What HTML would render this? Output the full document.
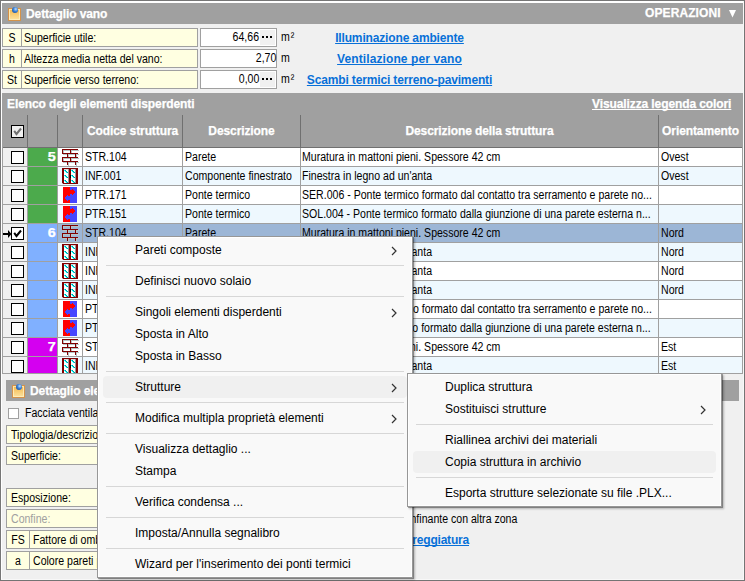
<!DOCTYPE html><html><head><meta charset="utf-8"><style>
*{margin:0;padding:0;box-sizing:border-box}
html,body{width:745px;height:581px;overflow:hidden}
body{position:relative;background:#f0f0f0;font-family:"Liberation Sans",sans-serif}
.a{position:absolute}
.t{position:absolute;font-size:12px;line-height:13px;white-space:nowrap;color:#000;transform:scaleX(0.88);transform-origin:0 0}
.bw{position:absolute;font-size:12px;font-weight:bold;line-height:13px;letter-spacing:-0.1px;white-space:nowrap;color:#fff;-webkit-text-stroke:0.25px #fff}
.lk{position:absolute;font-size:12px;font-weight:bold;line-height:13px;letter-spacing:-0.15px;white-space:nowrap;color:#0870d8;text-decoration:underline;text-decoration-skip-ink:none}
.yb{position:absolute;background:#ffffe1;border:1px solid #a0a0a0}
.m{position:absolute;font-size:12px;line-height:15px;white-space:nowrap;color:#000}
.sep{position:absolute;height:1px;background:#d7d7d7}
</style></head><body><div class="a" style="left:0px;top:0px;width:745px;height:1px;background:#767676;"></div>
<div class="a" style="left:0px;top:0px;width:1px;height:581px;background:#767676;"></div>
<div class="a" style="left:1px;top:1px;width:743px;height:2px;background:#ffffff;"></div>
<div class="a" style="left:1px;top:1px;width:1px;height:579px;background:#ffffff;"></div>
<div class="a" style="left:743px;top:1px;width:1px;height:579px;background:#f8f8f8;"></div>
<div class="a" style="left:1px;top:579px;width:743px;height:1px;background:#f8f8f8;"></div>
<div class="a" style="left:744px;top:0px;width:1px;height:581px;background:#747474;"></div>
<div class="a" style="left:0px;top:580px;width:745px;height:1px;background:#747474;"></div>
<div class="a" style="left:2px;top:3px;width:741px;height:21px;background:#a0a0a0;"></div>
<svg class="a" style="left:8px;top:7px" width="14" height="14" viewBox="0 0 14 14">
<defs><linearGradient id="ng87" x1="0" y1="0" x2="0" y2="1"><stop offset="0" stop-color="#f3b548"/><stop offset="1" stop-color="#fce4a2"/></linearGradient>
<radialGradient id="bg87" cx="0.62" cy="0.35" r="0.75"><stop offset="0" stop-color="#bfe0ff"/><stop offset="0.5" stop-color="#3b82d8"/><stop offset="1" stop-color="#1f4f9c"/></radialGradient></defs>
<rect x="0.5" y="1.5" width="12" height="12" fill="url(#ng87)" stroke="#d4924a" stroke-width="1"/>
<rect x="1.5" y="2.5" width="10" height="10" fill="none" stroke="#fff0c0" stroke-width="1" opacity="0.8"/>
<circle cx="7" cy="3" r="3" fill="url(#bg87)"/>
</svg>
<div class="bw" style="left:26px;top:8px;">Dettaglio vano</div>
<div class="bw" style="left:645px;top:7px;letter-spacing:0.1px">OPERAZIONI</div>
<svg class="a" style="left:729px;top:10px" width="7" height="8"><path d="M0 0H7L3.5 7.6Z" fill="#fff"/></svg>
<div class="a" style="left:2px;top:28px;width:196px;height:19px;background:#ffffe1;border:1px solid #a0a0a0;"></div>
<div class="a" style="left:21px;top:28px;width:1px;height:19px;background:#a0a0a0;"></div>
<div class="t" style="left:3px;width:18px;top:32px;text-align:center;transform-origin:50% 0;">S</div>
<div class="t" style="left:24px;top:32px;">Superficie utile:</div>
<div class="a" style="left:200px;top:28px;width:77px;height:19px;background:#ffffff;border:1px solid #a0a0a0;"></div>
<div class="a" style="left:260px;top:30px;width:15px;height:15px;background:#f0f0f0;"></div>
<svg class="a" style="left:262px;top:36px" width="12" height="3"><rect x="0" y="0" width="2" height="2" fill="#000"/><rect x="4" y="0" width="2" height="2" fill="#000"/><rect x="8" y="0" width="2" height="2" fill="#000"/></svg>
<div class="t" style="right:486px;top:31px;text-align:right;transform-origin:100% 0;">64,66</div>
<div class="t" style="left:281px;top:31px;letter-spacing:1px">m²</div>
<div class="lk" style="left:300px;width:199px;top:32px;text-align:center;transform-origin:50% 0;">Illuminazione ambiente</div>
<div class="a" style="left:2px;top:49px;width:196px;height:19px;background:#ffffe1;border:1px solid #a0a0a0;"></div>
<div class="a" style="left:21px;top:49px;width:1px;height:19px;background:#a0a0a0;"></div>
<div class="t" style="left:3px;width:18px;top:53px;text-align:center;transform-origin:50% 0;">h</div>
<div class="t" style="left:24px;top:53px;">Altezza media netta del vano:</div>
<div class="a" style="left:200px;top:49px;width:77px;height:19px;background:#ffffff;border:1px solid #a0a0a0;"></div>
<div class="t" style="right:469px;top:52px;text-align:right;transform-origin:100% 0;">2,70</div>
<div class="t" style="left:281px;top:52px;letter-spacing:1px">m</div>
<div class="lk" style="left:300px;width:199px;top:53px;text-align:center;transform-origin:50% 0;letter-spacing:0.1px">Ventilazione per vano</div>
<div class="a" style="left:2px;top:70px;width:196px;height:19px;background:#ffffe1;border:1px solid #a0a0a0;"></div>
<div class="a" style="left:21px;top:70px;width:1px;height:19px;background:#a0a0a0;"></div>
<div class="t" style="left:3px;width:18px;top:74px;text-align:center;transform-origin:50% 0;">St</div>
<div class="t" style="left:24px;top:74px;">Superficie verso terreno:</div>
<div class="a" style="left:200px;top:70px;width:77px;height:19px;background:#ffffff;border:1px solid #a0a0a0;"></div>
<div class="a" style="left:260px;top:72px;width:15px;height:15px;background:#f0f0f0;"></div>
<svg class="a" style="left:262px;top:78px" width="12" height="3"><rect x="0" y="0" width="2" height="2" fill="#000"/><rect x="4" y="0" width="2" height="2" fill="#000"/><rect x="8" y="0" width="2" height="2" fill="#000"/></svg>
<div class="t" style="right:486px;top:73px;text-align:right;transform-origin:100% 0;">0,00</div>
<div class="t" style="left:281px;top:73px;letter-spacing:1px">m²</div>
<div class="lk" style="left:300px;width:199px;top:74px;text-align:center;transform-origin:50% 0;">Scambi termici terreno-pavimenti</div>
<div class="a" style="left:2px;top:93px;width:741px;height:54px;background:#a0a0a0;"></div>
<div class="bw" style="left:7px;top:98px;">Elenco degli elementi disperdenti</div>
<div class="bw" style="left:592px;top:98px;text-decoration:underline;text-decoration-skip-ink:none">Visualizza legenda colori</div>
<div class="a" style="left:27px;top:115px;width:1px;height:32px;background:#707070;"></div>
<div class="a" style="left:57px;top:115px;width:1px;height:32px;background:#707070;"></div>
<div class="a" style="left:82px;top:115px;width:1px;height:32px;background:#707070;"></div>
<div class="a" style="left:182px;top:115px;width:1px;height:32px;background:#707070;"></div>
<div class="a" style="left:300px;top:115px;width:1px;height:32px;background:#707070;"></div>
<div class="a" style="left:658px;top:115px;width:1px;height:32px;background:#707070;"></div>
<div class="a" style="left:2px;top:147px;width:741px;height:1px;background:#707070;"></div>
<div class="a" style="left:11px;top:125px;width:13px;height:13px;background:#f0f0f0;border:1px solid #000;"></div>
<svg class="a" style="left:13px;top:127px" width="10" height="10"><path d="M1.2 3.8L3.5 7L8 1.5" stroke="#707070" stroke-width="2" fill="none"/></svg>
<div class="bw" style="left:83px;width:99px;top:125px;text-align:center;transform-origin:50% 0;">Codice struttura</div>
<div class="bw" style="left:183px;width:117px;top:125px;text-align:center;transform-origin:50% 0;">Descrizione</div>
<div class="bw" style="left:301px;width:357px;top:125px;text-align:center;transform-origin:50% 0;">Descrizione della struttura</div>
<div class="bw" style="left:659px;width:83px;top:125px;text-align:center;transform-origin:50% 0;">Orientamento</div>
<div class="a" style="left:3px;top:148px;width:24px;height:18px;background:#f0f0f0;"></div>
<div class="a" style="left:28px;top:148px;width:29px;height:18px;background:#4caa4c;"></div>
<div class="a" style="left:58px;top:148px;width:24px;height:18px;background:#ffffff;"></div>
<div class="a" style="left:83px;top:148px;width:659px;height:18px;background:#ffffff;"></div>
<div class="a" style="left:2px;top:166px;width:741px;height:1px;background:#a0a0a0;"></div>
<div class="a" style="left:27px;top:148px;width:1px;height:18px;background:#a0a0a0;"></div>
<div class="a" style="left:57px;top:148px;width:1px;height:18px;background:#a0a0a0;"></div>
<div class="a" style="left:82px;top:148px;width:1px;height:18px;background:#a0a0a0;"></div>
<div class="a" style="left:182px;top:148px;width:1px;height:18px;background:#a0a0a0;"></div>
<div class="a" style="left:300px;top:148px;width:1px;height:18px;background:#a0a0a0;"></div>
<div class="a" style="left:658px;top:148px;width:1px;height:18px;background:#a0a0a0;"></div>
<div class="a" style="left:11px;top:151px;width:13px;height:13px;background:#ffffff;border:1px solid #000;"></div>
<div class="bw" style="right:689px;top:151px;text-align:right;transform-origin:100% 0;letter-spacing:0;font-size:12px;transform:scaleX(1.2)">5</div>
<svg class="a" style="left:62px;top:149px" width="17" height="17" shape-rendering="crispEdges"><path d="M0 0h16v1h-16zM0 4h16v1h-16zM0 8h16v1h-16zM0 12h16v1h-16zM0 1h1v3h-1zM8 1h1v3h-1zM0 9h1v3h-1zM8 9h1v3h-1zM5 5h1v3h-1zM13 5h1v3h-1zM5 13h1v3h-1zM13 13h1v3h-1z" fill="#b4c4c4" transform="translate(1,1)"/><path d="M0 0h16v1h-16zM0 4h16v1h-16zM0 8h16v1h-16zM0 12h16v1h-16zM0 1h1v3h-1zM8 1h1v3h-1zM0 9h1v3h-1zM8 9h1v3h-1zM5 5h1v3h-1zM13 5h1v3h-1zM5 13h1v3h-1zM13 13h1v3h-1z" fill="#800000"/></svg>
<div class="t" style="left:85px;top:151px;">STR.104</div>
<div class="t" style="left:185px;top:151px;">Parete</div>
<div class="t" style="left:302px;top:151px;">Muratura in mattoni pieni. Spessore 42 cm</div>
<div class="t" style="left:661px;top:151px;">Ovest</div>
<div class="a" style="left:3px;top:167px;width:24px;height:18px;background:#f0f0f0;"></div>
<div class="a" style="left:28px;top:167px;width:29px;height:18px;background:#4caa4c;"></div>
<div class="a" style="left:58px;top:167px;width:24px;height:18px;background:#eef8fe;"></div>
<div class="a" style="left:83px;top:167px;width:659px;height:18px;background:#eef8fe;"></div>
<div class="a" style="left:2px;top:185px;width:741px;height:1px;background:#a0a0a0;"></div>
<div class="a" style="left:27px;top:167px;width:1px;height:18px;background:#a0a0a0;"></div>
<div class="a" style="left:57px;top:167px;width:1px;height:18px;background:#a0a0a0;"></div>
<div class="a" style="left:82px;top:167px;width:1px;height:18px;background:#a0a0a0;"></div>
<div class="a" style="left:182px;top:167px;width:1px;height:18px;background:#a0a0a0;"></div>
<div class="a" style="left:300px;top:167px;width:1px;height:18px;background:#a0a0a0;"></div>
<div class="a" style="left:658px;top:167px;width:1px;height:18px;background:#a0a0a0;"></div>
<div class="a" style="left:11px;top:170px;width:13px;height:13px;background:#ffffff;border:1px solid #000;"></div>
<svg class="a" style="left:62px;top:168px" width="16" height="16" shape-rendering="crispEdges">
<rect x="0" y="0" width="16" height="16" fill="#800000"/>
<rect x="0" y="15" width="1" height="1" fill="#f0f8ff" opacity="0.7"/>
<rect x="2" y="1" width="5" height="14" fill="#ffffff"/><rect x="9" y="1" width="5" height="14" fill="#ffffff"/>
<rect x="6" y="1" width="1" height="14" fill="#9a9a9a"/><rect x="13" y="1" width="1" height="14" fill="#9a9a9a"/>
<rect x="2" y="1" width="4" height="1" fill="#d8d8d8"/><rect x="9" y="1" width="4" height="1" fill="#d8d8d8"/>
<path d="M2 2h1v1h-1zM3 3h1v1h-1zM4 4h1v1h-1zM2 7h1v1h-1zM3 8h1v1h-1zM4 9h1v1h-1zM2 12h1v1h-1zM3 13h1v1h-1zM4 14h1v1h-1zM9 2h1v1h-1zM10 3h1v1h-1zM11 4h1v1h-1zM9 7h1v1h-1zM10 8h1v1h-1zM11 9h1v1h-1zM9 12h1v1h-1zM10 13h1v1h-1zM11 14h1v1h-1z" fill="#00ffff"/><path d="M3 2h1v1h-1zM4 3h1v1h-1zM5 4h1v1h-1zM3 7h1v1h-1zM4 8h1v1h-1zM5 9h1v1h-1zM3 12h1v1h-1zM4 13h1v1h-1zM5 14h1v1h-1zM10 2h1v1h-1zM11 3h1v1h-1zM12 4h1v1h-1zM10 7h1v1h-1zM11 8h1v1h-1zM12 9h1v1h-1zM10 12h1v1h-1zM11 13h1v1h-1zM12 14h1v1h-1z" fill="#00a0a0"/>
<rect x="8" y="7" width="1" height="3" fill="#000"/>
</svg>
<div class="t" style="left:85px;top:170px;">INF.001</div>
<div class="t" style="left:185px;top:170px;">Componente finestrato</div>
<div class="t" style="left:302px;top:170px;">Finestra in legno ad un'anta</div>
<div class="t" style="left:661px;top:170px;">Ovest</div>
<div class="a" style="left:3px;top:186px;width:24px;height:18px;background:#f0f0f0;"></div>
<div class="a" style="left:28px;top:186px;width:29px;height:18px;background:#4caa4c;"></div>
<div class="a" style="left:58px;top:186px;width:24px;height:18px;background:#ffffff;"></div>
<div class="a" style="left:83px;top:186px;width:659px;height:18px;background:#ffffff;"></div>
<div class="a" style="left:2px;top:204px;width:741px;height:1px;background:#a0a0a0;"></div>
<div class="a" style="left:27px;top:186px;width:1px;height:18px;background:#a0a0a0;"></div>
<div class="a" style="left:57px;top:186px;width:1px;height:18px;background:#a0a0a0;"></div>
<div class="a" style="left:82px;top:186px;width:1px;height:18px;background:#a0a0a0;"></div>
<div class="a" style="left:182px;top:186px;width:1px;height:18px;background:#a0a0a0;"></div>
<div class="a" style="left:300px;top:186px;width:1px;height:18px;background:#a0a0a0;"></div>
<div class="a" style="left:658px;top:186px;width:1px;height:18px;background:#a0a0a0;"></div>
<div class="a" style="left:11px;top:189px;width:13px;height:13px;background:#ffffff;border:1px solid #000;"></div>
<svg class="a" style="left:63px;top:187px" width="14" height="16" shape-rendering="crispEdges">
<rect x="0" y="0" width="7" height="16" fill="#ff0000"/><rect x="7" y="0" width="7" height="16" fill="#4646ff"/>
<path d="M7 3h2v-1h1v1h1v1h1v2h-1v1h-1v1h-1v-1h-2z" fill="#ff0000"/>
<path d="M7 9h-2v-1h-1v1h-1v1h-1v2h1v1h1v1h1v-1h2z" fill="#4646ff"/>
</svg>
<div class="t" style="left:85px;top:189px;">PTR.171</div>
<div class="t" style="left:185px;top:189px;">Ponte termico</div>
<div class="t" style="left:302px;top:189px;">SER.006 - Ponte termico formato dal contatto tra serramento e parete no...</div>
<div class="t" style="left:661px;top:189px;"></div>
<div class="a" style="left:3px;top:205px;width:24px;height:18px;background:#f0f0f0;"></div>
<div class="a" style="left:28px;top:205px;width:29px;height:18px;background:#4caa4c;"></div>
<div class="a" style="left:58px;top:205px;width:24px;height:18px;background:#eef8fe;"></div>
<div class="a" style="left:83px;top:205px;width:659px;height:18px;background:#eef8fe;"></div>
<div class="a" style="left:2px;top:223px;width:741px;height:1px;background:#a0a0a0;"></div>
<div class="a" style="left:27px;top:205px;width:1px;height:18px;background:#a0a0a0;"></div>
<div class="a" style="left:57px;top:205px;width:1px;height:18px;background:#a0a0a0;"></div>
<div class="a" style="left:82px;top:205px;width:1px;height:18px;background:#a0a0a0;"></div>
<div class="a" style="left:182px;top:205px;width:1px;height:18px;background:#a0a0a0;"></div>
<div class="a" style="left:300px;top:205px;width:1px;height:18px;background:#a0a0a0;"></div>
<div class="a" style="left:658px;top:205px;width:1px;height:18px;background:#a0a0a0;"></div>
<div class="a" style="left:11px;top:208px;width:13px;height:13px;background:#ffffff;border:1px solid #000;"></div>
<svg class="a" style="left:63px;top:206px" width="14" height="16" shape-rendering="crispEdges">
<rect x="0" y="0" width="7" height="16" fill="#ff0000"/><rect x="7" y="0" width="7" height="16" fill="#4646ff"/>
<path d="M7 3h2v-1h1v1h1v1h1v2h-1v1h-1v1h-1v-1h-2z" fill="#ff0000"/>
<path d="M7 9h-2v-1h-1v1h-1v1h-1v2h1v1h1v1h1v-1h2z" fill="#4646ff"/>
</svg>
<div class="t" style="left:85px;top:208px;">PTR.151</div>
<div class="t" style="left:185px;top:208px;">Ponte termico</div>
<div class="t" style="left:302px;top:208px;">SOL.004 - Ponte termico formato dalla giunzione di una parete esterna n...</div>
<div class="t" style="left:661px;top:208px;"></div>
<div class="a" style="left:3px;top:224px;width:24px;height:18px;background:#f0f0f0;"></div>
<div class="a" style="left:28px;top:224px;width:29px;height:18px;background:#80b0ff;"></div>
<div class="a" style="left:58px;top:224px;width:24px;height:18px;background:#9cb6d6;"></div>
<div class="a" style="left:83px;top:224px;width:659px;height:18px;background:#9cb6d6;"></div>
<div class="a" style="left:2px;top:242px;width:741px;height:1px;background:#a0a0a0;"></div>
<div class="a" style="left:27px;top:224px;width:1px;height:18px;background:#a0a0a0;"></div>
<div class="a" style="left:57px;top:224px;width:1px;height:18px;background:#a0a0a0;"></div>
<div class="a" style="left:82px;top:224px;width:1px;height:18px;background:#a0a0a0;"></div>
<div class="a" style="left:182px;top:224px;width:1px;height:18px;background:#a0a0a0;"></div>
<div class="a" style="left:300px;top:224px;width:1px;height:18px;background:#a0a0a0;"></div>
<div class="a" style="left:658px;top:224px;width:1px;height:18px;background:#a0a0a0;"></div>
<div class="a" style="left:11px;top:227px;width:13px;height:13px;background:#ffffff;border:1px solid #000;"></div>
<svg class="a" style="left:13px;top:229px" width="10" height="10"><path d="M1.2 3.8L3.5 7L8 1.5" stroke="#000" stroke-width="2" fill="none"/></svg>
<svg class="a" style="left:3px;top:230px" width="9" height="8"><path d="M0 3h5v2h-5z M5 0l3.5 4l-3.5 4z" fill="#000"/></svg>
<div class="bw" style="right:689px;top:227px;text-align:right;transform-origin:100% 0;letter-spacing:0;font-size:12px;transform:scaleX(1.2)">6</div>
<svg class="a" style="left:62px;top:225px" width="17" height="17" shape-rendering="crispEdges"><path d="M0 0h16v1h-16zM0 4h16v1h-16zM0 8h16v1h-16zM0 12h16v1h-16zM0 1h1v3h-1zM8 1h1v3h-1zM0 9h1v3h-1zM8 9h1v3h-1zM5 5h1v3h-1zM13 5h1v3h-1zM5 13h1v3h-1zM13 13h1v3h-1z" fill="#b4c4c4" transform="translate(1,1)"/><path d="M0 0h16v1h-16zM0 4h16v1h-16zM0 8h16v1h-16zM0 12h16v1h-16zM0 1h1v3h-1zM8 1h1v3h-1zM0 9h1v3h-1zM8 9h1v3h-1zM5 5h1v3h-1zM13 5h1v3h-1zM5 13h1v3h-1zM13 13h1v3h-1z" fill="#800000"/></svg>
<div class="t" style="left:85px;top:227px;">STR.104</div>
<div class="t" style="left:185px;top:227px;">Parete</div>
<div class="t" style="left:302px;top:227px;">Muratura in mattoni pieni. Spessore 42 cm</div>
<div class="t" style="left:661px;top:227px;">Nord</div>
<div class="a" style="left:3px;top:243px;width:24px;height:18px;background:#f0f0f0;"></div>
<div class="a" style="left:28px;top:243px;width:29px;height:18px;background:#80b0ff;"></div>
<div class="a" style="left:58px;top:243px;width:24px;height:18px;background:#eef8fe;"></div>
<div class="a" style="left:83px;top:243px;width:659px;height:18px;background:#eef8fe;"></div>
<div class="a" style="left:2px;top:261px;width:741px;height:1px;background:#a0a0a0;"></div>
<div class="a" style="left:27px;top:243px;width:1px;height:18px;background:#a0a0a0;"></div>
<div class="a" style="left:57px;top:243px;width:1px;height:18px;background:#a0a0a0;"></div>
<div class="a" style="left:82px;top:243px;width:1px;height:18px;background:#a0a0a0;"></div>
<div class="a" style="left:182px;top:243px;width:1px;height:18px;background:#a0a0a0;"></div>
<div class="a" style="left:300px;top:243px;width:1px;height:18px;background:#a0a0a0;"></div>
<div class="a" style="left:658px;top:243px;width:1px;height:18px;background:#a0a0a0;"></div>
<div class="a" style="left:11px;top:246px;width:13px;height:13px;background:#ffffff;border:1px solid #000;"></div>
<svg class="a" style="left:62px;top:244px" width="16" height="16" shape-rendering="crispEdges">
<rect x="0" y="0" width="16" height="16" fill="#800000"/>
<rect x="0" y="15" width="1" height="1" fill="#f0f8ff" opacity="0.7"/>
<rect x="2" y="1" width="5" height="14" fill="#ffffff"/><rect x="9" y="1" width="5" height="14" fill="#ffffff"/>
<rect x="6" y="1" width="1" height="14" fill="#9a9a9a"/><rect x="13" y="1" width="1" height="14" fill="#9a9a9a"/>
<rect x="2" y="1" width="4" height="1" fill="#d8d8d8"/><rect x="9" y="1" width="4" height="1" fill="#d8d8d8"/>
<path d="M2 2h1v1h-1zM3 3h1v1h-1zM4 4h1v1h-1zM2 7h1v1h-1zM3 8h1v1h-1zM4 9h1v1h-1zM2 12h1v1h-1zM3 13h1v1h-1zM4 14h1v1h-1zM9 2h1v1h-1zM10 3h1v1h-1zM11 4h1v1h-1zM9 7h1v1h-1zM10 8h1v1h-1zM11 9h1v1h-1zM9 12h1v1h-1zM10 13h1v1h-1zM11 14h1v1h-1z" fill="#00ffff"/><path d="M3 2h1v1h-1zM4 3h1v1h-1zM5 4h1v1h-1zM3 7h1v1h-1zM4 8h1v1h-1zM5 9h1v1h-1zM3 12h1v1h-1zM4 13h1v1h-1zM5 14h1v1h-1zM10 2h1v1h-1zM11 3h1v1h-1zM12 4h1v1h-1zM10 7h1v1h-1zM11 8h1v1h-1zM12 9h1v1h-1zM10 12h1v1h-1zM11 13h1v1h-1zM12 14h1v1h-1z" fill="#00a0a0"/>
<rect x="8" y="7" width="1" height="3" fill="#000"/>
</svg>
<div class="t" style="left:85px;top:246px;">INF.002</div>
<div class="t" style="left:185px;top:246px;">Componente finestrato</div>
<div class="t" style="left:302px;top:246px;">Finestra in legno ad un'anta</div>
<div class="t" style="left:661px;top:246px;">Nord</div>
<div class="a" style="left:3px;top:262px;width:24px;height:18px;background:#f0f0f0;"></div>
<div class="a" style="left:28px;top:262px;width:29px;height:18px;background:#80b0ff;"></div>
<div class="a" style="left:58px;top:262px;width:24px;height:18px;background:#ffffff;"></div>
<div class="a" style="left:83px;top:262px;width:659px;height:18px;background:#ffffff;"></div>
<div class="a" style="left:2px;top:280px;width:741px;height:1px;background:#a0a0a0;"></div>
<div class="a" style="left:27px;top:262px;width:1px;height:18px;background:#a0a0a0;"></div>
<div class="a" style="left:57px;top:262px;width:1px;height:18px;background:#a0a0a0;"></div>
<div class="a" style="left:82px;top:262px;width:1px;height:18px;background:#a0a0a0;"></div>
<div class="a" style="left:182px;top:262px;width:1px;height:18px;background:#a0a0a0;"></div>
<div class="a" style="left:300px;top:262px;width:1px;height:18px;background:#a0a0a0;"></div>
<div class="a" style="left:658px;top:262px;width:1px;height:18px;background:#a0a0a0;"></div>
<div class="a" style="left:11px;top:265px;width:13px;height:13px;background:#ffffff;border:1px solid #000;"></div>
<svg class="a" style="left:62px;top:263px" width="16" height="16" shape-rendering="crispEdges">
<rect x="0" y="0" width="16" height="16" fill="#800000"/>
<rect x="0" y="15" width="1" height="1" fill="#f0f8ff" opacity="0.7"/>
<rect x="2" y="1" width="5" height="14" fill="#ffffff"/><rect x="9" y="1" width="5" height="14" fill="#ffffff"/>
<rect x="6" y="1" width="1" height="14" fill="#9a9a9a"/><rect x="13" y="1" width="1" height="14" fill="#9a9a9a"/>
<rect x="2" y="1" width="4" height="1" fill="#d8d8d8"/><rect x="9" y="1" width="4" height="1" fill="#d8d8d8"/>
<path d="M2 2h1v1h-1zM3 3h1v1h-1zM4 4h1v1h-1zM2 7h1v1h-1zM3 8h1v1h-1zM4 9h1v1h-1zM2 12h1v1h-1zM3 13h1v1h-1zM4 14h1v1h-1zM9 2h1v1h-1zM10 3h1v1h-1zM11 4h1v1h-1zM9 7h1v1h-1zM10 8h1v1h-1zM11 9h1v1h-1zM9 12h1v1h-1zM10 13h1v1h-1zM11 14h1v1h-1z" fill="#00ffff"/><path d="M3 2h1v1h-1zM4 3h1v1h-1zM5 4h1v1h-1zM3 7h1v1h-1zM4 8h1v1h-1zM5 9h1v1h-1zM3 12h1v1h-1zM4 13h1v1h-1zM5 14h1v1h-1zM10 2h1v1h-1zM11 3h1v1h-1zM12 4h1v1h-1zM10 7h1v1h-1zM11 8h1v1h-1zM12 9h1v1h-1zM10 12h1v1h-1zM11 13h1v1h-1zM12 14h1v1h-1z" fill="#00a0a0"/>
<rect x="8" y="7" width="1" height="3" fill="#000"/>
</svg>
<div class="t" style="left:85px;top:265px;">INF.003</div>
<div class="t" style="left:185px;top:265px;">Componente finestrato</div>
<div class="t" style="left:302px;top:265px;">Finestra in legno ad un'anta</div>
<div class="t" style="left:661px;top:265px;">Nord</div>
<div class="a" style="left:3px;top:281px;width:24px;height:18px;background:#f0f0f0;"></div>
<div class="a" style="left:28px;top:281px;width:29px;height:18px;background:#80b0ff;"></div>
<div class="a" style="left:58px;top:281px;width:24px;height:18px;background:#eef8fe;"></div>
<div class="a" style="left:83px;top:281px;width:659px;height:18px;background:#eef8fe;"></div>
<div class="a" style="left:2px;top:299px;width:741px;height:1px;background:#a0a0a0;"></div>
<div class="a" style="left:27px;top:281px;width:1px;height:18px;background:#a0a0a0;"></div>
<div class="a" style="left:57px;top:281px;width:1px;height:18px;background:#a0a0a0;"></div>
<div class="a" style="left:82px;top:281px;width:1px;height:18px;background:#a0a0a0;"></div>
<div class="a" style="left:182px;top:281px;width:1px;height:18px;background:#a0a0a0;"></div>
<div class="a" style="left:300px;top:281px;width:1px;height:18px;background:#a0a0a0;"></div>
<div class="a" style="left:658px;top:281px;width:1px;height:18px;background:#a0a0a0;"></div>
<div class="a" style="left:11px;top:284px;width:13px;height:13px;background:#ffffff;border:1px solid #000;"></div>
<svg class="a" style="left:62px;top:282px" width="16" height="16" shape-rendering="crispEdges">
<rect x="0" y="0" width="16" height="16" fill="#800000"/>
<rect x="0" y="15" width="1" height="1" fill="#f0f8ff" opacity="0.7"/>
<rect x="2" y="1" width="5" height="14" fill="#ffffff"/><rect x="9" y="1" width="5" height="14" fill="#ffffff"/>
<rect x="6" y="1" width="1" height="14" fill="#9a9a9a"/><rect x="13" y="1" width="1" height="14" fill="#9a9a9a"/>
<rect x="2" y="1" width="4" height="1" fill="#d8d8d8"/><rect x="9" y="1" width="4" height="1" fill="#d8d8d8"/>
<path d="M2 2h1v1h-1zM3 3h1v1h-1zM4 4h1v1h-1zM2 7h1v1h-1zM3 8h1v1h-1zM4 9h1v1h-1zM2 12h1v1h-1zM3 13h1v1h-1zM4 14h1v1h-1zM9 2h1v1h-1zM10 3h1v1h-1zM11 4h1v1h-1zM9 7h1v1h-1zM10 8h1v1h-1zM11 9h1v1h-1zM9 12h1v1h-1zM10 13h1v1h-1zM11 14h1v1h-1z" fill="#00ffff"/><path d="M3 2h1v1h-1zM4 3h1v1h-1zM5 4h1v1h-1zM3 7h1v1h-1zM4 8h1v1h-1zM5 9h1v1h-1zM3 12h1v1h-1zM4 13h1v1h-1zM5 14h1v1h-1zM10 2h1v1h-1zM11 3h1v1h-1zM12 4h1v1h-1zM10 7h1v1h-1zM11 8h1v1h-1zM12 9h1v1h-1zM10 12h1v1h-1zM11 13h1v1h-1zM12 14h1v1h-1z" fill="#00a0a0"/>
<rect x="8" y="7" width="1" height="3" fill="#000"/>
</svg>
<div class="t" style="left:85px;top:284px;">INF.004</div>
<div class="t" style="left:185px;top:284px;">Componente finestrato</div>
<div class="t" style="left:302px;top:284px;">Finestra in legno ad un'anta</div>
<div class="t" style="left:661px;top:284px;">Nord</div>
<div class="a" style="left:3px;top:300px;width:24px;height:18px;background:#f0f0f0;"></div>
<div class="a" style="left:28px;top:300px;width:29px;height:18px;background:#80b0ff;"></div>
<div class="a" style="left:58px;top:300px;width:24px;height:18px;background:#ffffff;"></div>
<div class="a" style="left:83px;top:300px;width:659px;height:18px;background:#ffffff;"></div>
<div class="a" style="left:2px;top:318px;width:741px;height:1px;background:#a0a0a0;"></div>
<div class="a" style="left:27px;top:300px;width:1px;height:18px;background:#a0a0a0;"></div>
<div class="a" style="left:57px;top:300px;width:1px;height:18px;background:#a0a0a0;"></div>
<div class="a" style="left:82px;top:300px;width:1px;height:18px;background:#a0a0a0;"></div>
<div class="a" style="left:182px;top:300px;width:1px;height:18px;background:#a0a0a0;"></div>
<div class="a" style="left:300px;top:300px;width:1px;height:18px;background:#a0a0a0;"></div>
<div class="a" style="left:658px;top:300px;width:1px;height:18px;background:#a0a0a0;"></div>
<div class="a" style="left:11px;top:303px;width:13px;height:13px;background:#ffffff;border:1px solid #000;"></div>
<svg class="a" style="left:63px;top:301px" width="14" height="16" shape-rendering="crispEdges">
<rect x="0" y="0" width="7" height="16" fill="#ff0000"/><rect x="7" y="0" width="7" height="16" fill="#4646ff"/>
<path d="M7 3h2v-1h1v1h1v1h1v2h-1v1h-1v1h-1v-1h-2z" fill="#ff0000"/>
<path d="M7 9h-2v-1h-1v1h-1v1h-1v2h1v1h1v1h1v-1h2z" fill="#4646ff"/>
</svg>
<div class="t" style="left:85px;top:303px;">PTR.172</div>
<div class="t" style="left:185px;top:303px;">Ponte termico</div>
<div class="t" style="left:302px;top:303px;">SER.006 - Ponte termico formato dal contatto tra serramento e parete no...</div>
<div class="t" style="left:661px;top:303px;"></div>
<div class="a" style="left:3px;top:319px;width:24px;height:18px;background:#f0f0f0;"></div>
<div class="a" style="left:28px;top:319px;width:29px;height:18px;background:#80b0ff;"></div>
<div class="a" style="left:58px;top:319px;width:24px;height:18px;background:#eef8fe;"></div>
<div class="a" style="left:83px;top:319px;width:659px;height:18px;background:#eef8fe;"></div>
<div class="a" style="left:2px;top:337px;width:741px;height:1px;background:#a0a0a0;"></div>
<div class="a" style="left:27px;top:319px;width:1px;height:18px;background:#a0a0a0;"></div>
<div class="a" style="left:57px;top:319px;width:1px;height:18px;background:#a0a0a0;"></div>
<div class="a" style="left:82px;top:319px;width:1px;height:18px;background:#a0a0a0;"></div>
<div class="a" style="left:182px;top:319px;width:1px;height:18px;background:#a0a0a0;"></div>
<div class="a" style="left:300px;top:319px;width:1px;height:18px;background:#a0a0a0;"></div>
<div class="a" style="left:658px;top:319px;width:1px;height:18px;background:#a0a0a0;"></div>
<div class="a" style="left:11px;top:322px;width:13px;height:13px;background:#ffffff;border:1px solid #000;"></div>
<svg class="a" style="left:63px;top:320px" width="14" height="16" shape-rendering="crispEdges">
<rect x="0" y="0" width="7" height="16" fill="#ff0000"/><rect x="7" y="0" width="7" height="16" fill="#4646ff"/>
<path d="M7 3h2v-1h1v1h1v1h1v2h-1v1h-1v1h-1v-1h-2z" fill="#ff0000"/>
<path d="M7 9h-2v-1h-1v1h-1v1h-1v2h1v1h1v1h1v-1h2z" fill="#4646ff"/>
</svg>
<div class="t" style="left:85px;top:322px;">PTR.152</div>
<div class="t" style="left:185px;top:322px;">Ponte termico</div>
<div class="t" style="left:302px;top:322px;">SOL.004 - Ponte termico formato dalla giunzione di una parete esterna n...</div>
<div class="t" style="left:661px;top:322px;"></div>
<div class="a" style="left:3px;top:338px;width:24px;height:18px;background:#f0f0f0;"></div>
<div class="a" style="left:28px;top:338px;width:29px;height:18px;background:#d400f0;"></div>
<div class="a" style="left:58px;top:338px;width:24px;height:18px;background:#ffffff;"></div>
<div class="a" style="left:83px;top:338px;width:659px;height:18px;background:#ffffff;"></div>
<div class="a" style="left:2px;top:356px;width:741px;height:1px;background:#a0a0a0;"></div>
<div class="a" style="left:27px;top:338px;width:1px;height:18px;background:#a0a0a0;"></div>
<div class="a" style="left:57px;top:338px;width:1px;height:18px;background:#a0a0a0;"></div>
<div class="a" style="left:82px;top:338px;width:1px;height:18px;background:#a0a0a0;"></div>
<div class="a" style="left:182px;top:338px;width:1px;height:18px;background:#a0a0a0;"></div>
<div class="a" style="left:300px;top:338px;width:1px;height:18px;background:#a0a0a0;"></div>
<div class="a" style="left:658px;top:338px;width:1px;height:18px;background:#a0a0a0;"></div>
<div class="a" style="left:11px;top:341px;width:13px;height:13px;background:#ffffff;border:1px solid #000;"></div>
<div class="bw" style="right:689px;top:341px;text-align:right;transform-origin:100% 0;letter-spacing:0;font-size:12px;transform:scaleX(1.2)">7</div>
<svg class="a" style="left:62px;top:339px" width="17" height="17" shape-rendering="crispEdges"><path d="M0 0h16v1h-16zM0 4h16v1h-16zM0 8h16v1h-16zM0 12h16v1h-16zM0 1h1v3h-1zM8 1h1v3h-1zM0 9h1v3h-1zM8 9h1v3h-1zM5 5h1v3h-1zM13 5h1v3h-1zM5 13h1v3h-1zM13 13h1v3h-1z" fill="#b4c4c4" transform="translate(1,1)"/><path d="M0 0h16v1h-16zM0 4h16v1h-16zM0 8h16v1h-16zM0 12h16v1h-16zM0 1h1v3h-1zM8 1h1v3h-1zM0 9h1v3h-1zM8 9h1v3h-1zM5 5h1v3h-1zM13 5h1v3h-1zM5 13h1v3h-1zM13 13h1v3h-1z" fill="#800000"/></svg>
<div class="t" style="left:85px;top:341px;">STR.104</div>
<div class="t" style="left:185px;top:341px;">Parete</div>
<div class="t" style="left:302px;top:341px;">Muratura in mattoni pieni. Spessore 42 cm</div>
<div class="t" style="left:661px;top:341px;">Est</div>
<div class="a" style="left:3px;top:357px;width:24px;height:18px;background:#f0f0f0;"></div>
<div class="a" style="left:28px;top:357px;width:29px;height:18px;background:#d400f0;"></div>
<div class="a" style="left:58px;top:357px;width:24px;height:18px;background:#eef8fe;"></div>
<div class="a" style="left:83px;top:357px;width:659px;height:18px;background:#eef8fe;"></div>
<div class="a" style="left:2px;top:375px;width:741px;height:1px;background:#a0a0a0;"></div>
<div class="a" style="left:27px;top:357px;width:1px;height:18px;background:#a0a0a0;"></div>
<div class="a" style="left:57px;top:357px;width:1px;height:18px;background:#a0a0a0;"></div>
<div class="a" style="left:82px;top:357px;width:1px;height:18px;background:#a0a0a0;"></div>
<div class="a" style="left:182px;top:357px;width:1px;height:18px;background:#a0a0a0;"></div>
<div class="a" style="left:300px;top:357px;width:1px;height:18px;background:#a0a0a0;"></div>
<div class="a" style="left:658px;top:357px;width:1px;height:18px;background:#a0a0a0;"></div>
<div class="a" style="left:11px;top:360px;width:13px;height:13px;background:#ffffff;border:1px solid #000;"></div>
<svg class="a" style="left:62px;top:358px" width="16" height="16" shape-rendering="crispEdges">
<rect x="0" y="0" width="16" height="16" fill="#800000"/>
<rect x="0" y="15" width="1" height="1" fill="#f0f8ff" opacity="0.7"/>
<rect x="2" y="1" width="5" height="14" fill="#ffffff"/><rect x="9" y="1" width="5" height="14" fill="#ffffff"/>
<rect x="6" y="1" width="1" height="14" fill="#9a9a9a"/><rect x="13" y="1" width="1" height="14" fill="#9a9a9a"/>
<rect x="2" y="1" width="4" height="1" fill="#d8d8d8"/><rect x="9" y="1" width="4" height="1" fill="#d8d8d8"/>
<path d="M2 2h1v1h-1zM3 3h1v1h-1zM4 4h1v1h-1zM2 7h1v1h-1zM3 8h1v1h-1zM4 9h1v1h-1zM2 12h1v1h-1zM3 13h1v1h-1zM4 14h1v1h-1zM9 2h1v1h-1zM10 3h1v1h-1zM11 4h1v1h-1zM9 7h1v1h-1zM10 8h1v1h-1zM11 9h1v1h-1zM9 12h1v1h-1zM10 13h1v1h-1zM11 14h1v1h-1z" fill="#00ffff"/><path d="M3 2h1v1h-1zM4 3h1v1h-1zM5 4h1v1h-1zM3 7h1v1h-1zM4 8h1v1h-1zM5 9h1v1h-1zM3 12h1v1h-1zM4 13h1v1h-1zM5 14h1v1h-1zM10 2h1v1h-1zM11 3h1v1h-1zM12 4h1v1h-1zM10 7h1v1h-1zM11 8h1v1h-1zM12 9h1v1h-1zM10 12h1v1h-1zM11 13h1v1h-1zM12 14h1v1h-1z" fill="#00a0a0"/>
<rect x="8" y="7" width="1" height="3" fill="#000"/>
</svg>
<div class="t" style="left:85px;top:360px;">INF.005</div>
<div class="t" style="left:185px;top:360px;">Componente finestrato</div>
<div class="t" style="left:302px;top:360px;">Finestra in legno ad un'anta</div>
<div class="t" style="left:661px;top:360px;">Est</div>
<div class="a" style="left:2px;top:147px;width:1px;height:227px;background:#a0a0a0;"></div>
<div class="a" style="left:742px;top:147px;width:1px;height:227px;background:#a0a0a0;"></div>
<div class="a" style="left:2px;top:373px;width:741px;height:1px;background:#a0a0a0;"></div>
<div class="a" style="left:2px;top:374px;width:741px;height:6px;background:#f0f0f0;"></div>
<div class="a" style="left:6px;top:380px;width:733px;height:21px;background:#a0a0a0;"></div>
<svg class="a" style="left:12px;top:384px" width="14" height="14" viewBox="0 0 14 14">
<defs><linearGradient id="ng12384" x1="0" y1="0" x2="0" y2="1"><stop offset="0" stop-color="#f3b548"/><stop offset="1" stop-color="#fce4a2"/></linearGradient>
<radialGradient id="bg12384" cx="0.62" cy="0.35" r="0.75"><stop offset="0" stop-color="#bfe0ff"/><stop offset="0.5" stop-color="#3b82d8"/><stop offset="1" stop-color="#1f4f9c"/></radialGradient></defs>
<rect x="0.5" y="1.5" width="12" height="12" fill="url(#ng12384)" stroke="#d4924a" stroke-width="1"/>
<rect x="1.5" y="2.5" width="10" height="10" fill="none" stroke="#fff0c0" stroke-width="1" opacity="0.8"/>
<circle cx="7" cy="3" r="3" fill="url(#bg12384)"/>
</svg>
<div class="bw" style="left:30px;top:385px;">Dettaglio elemento</div>
<div class="a" style="left:8px;top:408px;width:11px;height:11px;background:#ffffff;border:1px solid #a0a0a0;"></div>
<div class="t" style="left:25px;top:407px;">Facciata ventilata</div>
<div class="a" style="left:6px;top:425px;width:295px;height:19px;background:#ffffe1;border:1px solid #a0a0a0;"></div>
<div class="t" style="left:11px;top:429px;color:#000">Tipologia/descrizione</div>
<div class="a" style="left:6px;top:446px;width:295px;height:19px;background:#ffffe1;border:1px solid #a0a0a0;"></div>
<div class="t" style="left:11px;top:450px;color:#000">Superficie:</div>
<div class="a" style="left:6px;top:488px;width:295px;height:19px;background:#ffffe1;border:1px solid #a0a0a0;"></div>
<div class="t" style="left:11px;top:492px;color:#000">Esposizione:</div>
<div class="a" style="left:6px;top:509px;width:295px;height:19px;background:#ffffe1;border:1px solid #a0a0a0;"></div>
<div class="t" style="left:11px;top:513px;color:#a0a0a0">Confine:</div>
<div class="a" style="left:6px;top:530px;width:295px;height:19px;background:#ffffe1;border:1px solid #a0a0a0;"></div>
<div class="a" style="left:29px;top:530px;width:1px;height:19px;background:#a0a0a0;"></div>
<div class="t" style="left:7px;width:22px;top:534px;text-align:center;transform-origin:50% 0;">FS</div>
<div class="t" style="left:33px;top:534px;">Fattore di ombreggiatura</div>
<div class="a" style="left:6px;top:551px;width:295px;height:19px;background:#ffffe1;border:1px solid #a0a0a0;"></div>
<div class="a" style="left:29px;top:551px;width:1px;height:19px;background:#a0a0a0;"></div>
<div class="t" style="left:7px;width:22px;top:555px;text-align:center;transform-origin:50% 0;">a</div>
<div class="t" style="left:33px;top:555px;">Colore pareti perimetrali</div>
<div class="t" style="left:397px;top:513px;">Confinante con altra zona</div>
<div class="lk" style="right:276px;top:534px;text-align:right;transform-origin:100% 0;letter-spacing:-0.2px">ombreggiatura</div>
<div class="a" style="left:97px;top:236px;width:316px;height:342px;box-shadow:inset 1px 1px 0 #fff,inset -1px -1px 0 #fff,1px 1px 0 rgba(0,0,0,0.3),2px 2px 2px rgba(0,0,0,0.25);background:#f9f9f9;border:1px solid #979797"></div>
<div class="m" style="left:135px;top:243px;">Pareti composte</div>
<svg class="a" style="left:391px;top:246px" width="7" height="10"><path d="M1 1l4 4l-4 4" stroke="#333" stroke-width="1.2" fill="none"/></svg>
<div class="a" style="left:106px;top:265px;width:298px;height:1px;background:#d7d7d7;"></div>
<div class="m" style="left:135px;top:274px;">Definisci nuovo solaio</div>
<div class="a" style="left:106px;top:296px;width:298px;height:1px;background:#d7d7d7;"></div>
<div class="m" style="left:135px;top:305px;">Singoli elementi disperdenti</div>
<svg class="a" style="left:391px;top:308px" width="7" height="10"><path d="M1 1l4 4l-4 4" stroke="#333" stroke-width="1.2" fill="none"/></svg>
<div class="m" style="left:135px;top:327px;">Sposta in Alto</div>
<div class="m" style="left:135px;top:349px;">Sposta in Basso</div>
<div class="a" style="left:106px;top:371px;width:298px;height:1px;background:#d7d7d7;"></div>
<div class="a" style="left:103px;top:376px;width:304px;height:22px;background:#f0f0f0;border-radius:4px"></div>
<div class="m" style="left:135px;top:380px;">Strutture</div>
<svg class="a" style="left:391px;top:383px" width="7" height="10"><path d="M1 1l4 4l-4 4" stroke="#333" stroke-width="1.2" fill="none"/></svg>
<div class="a" style="left:106px;top:402px;width:298px;height:1px;background:#d7d7d7;"></div>
<div class="m" style="left:135px;top:411px;">Modifica multipla proprietà elementi</div>
<svg class="a" style="left:391px;top:414px" width="7" height="10"><path d="M1 1l4 4l-4 4" stroke="#333" stroke-width="1.2" fill="none"/></svg>
<div class="a" style="left:106px;top:433px;width:298px;height:1px;background:#d7d7d7;"></div>
<div class="m" style="left:135px;top:442px;">Visualizza dettaglio ...</div>
<div class="m" style="left:135px;top:464px;">Stampa</div>
<div class="a" style="left:106px;top:486px;width:298px;height:1px;background:#d7d7d7;"></div>
<div class="m" style="left:135px;top:495px;">Verifica condensa ...</div>
<div class="a" style="left:106px;top:517px;width:298px;height:1px;background:#d7d7d7;"></div>
<div class="m" style="left:135px;top:526px;">Imposta/Annulla segnalibro</div>
<div class="a" style="left:106px;top:548px;width:298px;height:1px;background:#d7d7d7;"></div>
<div class="m" style="left:135px;top:557px;">Wizard per l'inserimento dei ponti termici</div>
<div class="a" style="left:407px;top:373px;width:315px;height:134px;box-shadow:inset 1px 1px 0 #fff,inset -1px -1px 0 #fff,1px 1px 0 rgba(0,0,0,0.3),2px 2px 2px rgba(0,0,0,0.25);background:#f9f9f9;border:1px solid #979797"></div>
<div class="m" style="left:445px;top:380px;">Duplica struttura</div>
<div class="m" style="left:445px;top:402px;">Sostituisci strutture</div>
<svg class="a" style="left:700px;top:405px" width="7" height="10"><path d="M1 1l4 4l-4 4" stroke="#333" stroke-width="1.2" fill="none"/></svg>
<div class="a" style="left:416px;top:424px;width:297px;height:1px;background:#d7d7d7;"></div>
<div class="m" style="left:445px;top:433px;">Riallinea archivi dei materiali</div>
<div class="a" style="left:413px;top:451px;width:303px;height:22px;background:#f0f0f0;border-radius:4px"></div>
<div class="m" style="left:445px;top:455px;">Copia struttura in archivio</div>
<div class="a" style="left:416px;top:477px;width:297px;height:1px;background:#d7d7d7;"></div>
<div class="m" style="left:445px;top:486px;">Esporta strutture selezionate su file .PLX...</div></body></html>
